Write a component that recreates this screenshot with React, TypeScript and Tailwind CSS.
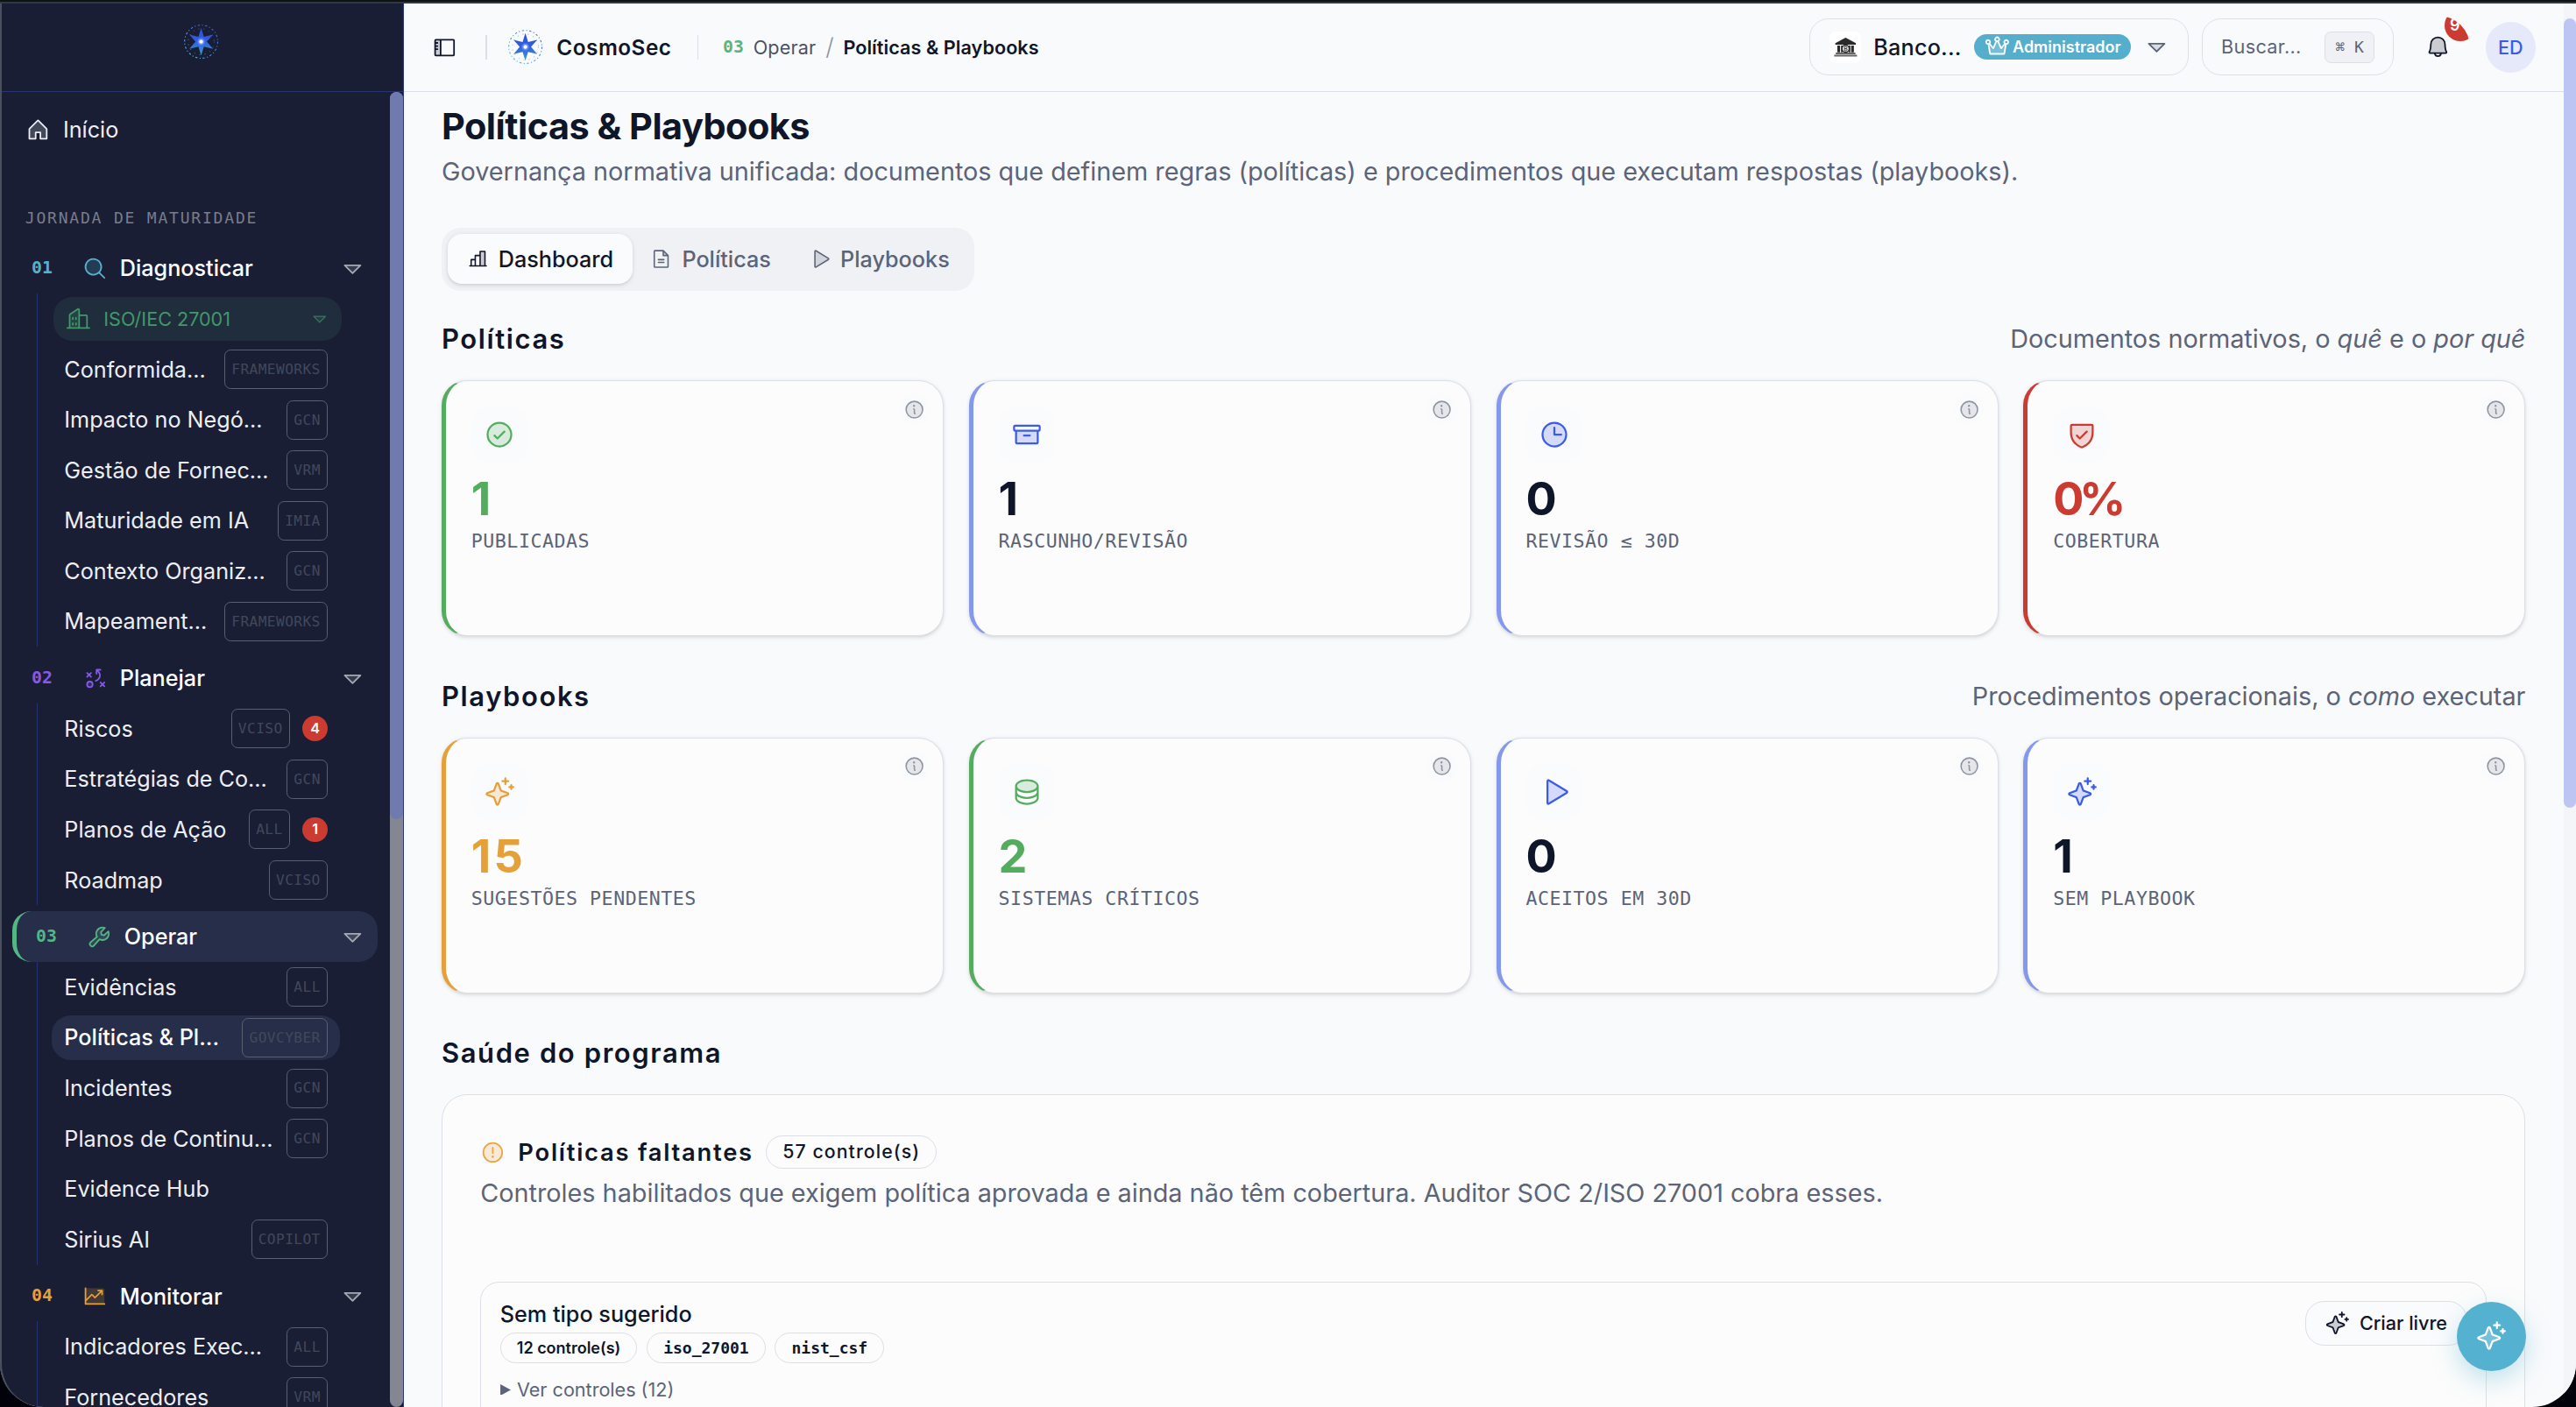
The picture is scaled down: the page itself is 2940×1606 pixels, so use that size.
import type { ReactNode } from 'react';
import type { IconType } from 'react-icons';
import {
  PiArchiveDuotone,
  PiBellDuotone,
  PiBuildingsDuotone,
  PiCaretDownDuotone,
  PiChartBarDuotone,
  PiChartLineUpDuotone,
  PiCheckCircleDuotone,
  PiClockDuotone,
  PiCrownDuotone,
  PiDatabaseDuotone,
  PiFileTextDuotone,
  PiHouseDuotone,
  PiInfoDuotone,
  PiMagnifyingGlassDuotone,
  PiPlayDuotone,
  PiShieldCheckDuotone,
  PiSidebarDuotone,
  PiSparkleDuotone,
  PiStrategyDuotone,
  PiWarningCircleDuotone,
  PiWrenchDuotone,
} from 'react-icons/pi';

interface NavItem {
  label: string;
  tag?: string;
  count?: number;
  active?: boolean;
}

interface NavGroup {
  num: string;
  label: string;
  icon: IconType;
  color: string;
  active?: boolean;
  framework?: string;
  items: NavItem[];
}

interface Stat {
  icon: IconType;
  value: string;
  label: string;
  border: string;
  iconColor: string;
  valueClass: string;
}

const mono = "font-['DejaVu_Sans_Mono','Liberation_Mono',monospace]";

const navGroups: NavGroup[] = [
  {
    num: '01',
    label: 'Diagnosticar',
    icon: PiMagnifyingGlassDuotone,
    color: 'text-[#54b1d0]',
    framework: 'ISO/IEC 27001',
    items: [
      { label: 'Conformida...', tag: 'FRAMEWORKS' },
      { label: 'Impacto no Negó...', tag: 'GCN' },
      { label: 'Gestão de Fornec...', tag: 'VRM' },
      { label: 'Maturidade em IA', tag: 'IMIA' },
      { label: 'Contexto Organiz...', tag: 'GCN' },
      { label: 'Mapeament...', tag: 'FRAMEWORKS' },
    ],
  },
  {
    num: '02',
    label: 'Planejar',
    icon: PiStrategyDuotone,
    color: 'text-[#8659ea]',
    items: [
      { label: 'Riscos', tag: 'VCISO', count: 4 },
      { label: 'Estratégias de Co...', tag: 'GCN' },
      { label: 'Planos de Ação', tag: 'ALL', count: 1 },
      { label: 'Roadmap', tag: 'VCISO' },
    ],
  },
  {
    num: '03',
    label: 'Operar',
    icon: PiWrenchDuotone,
    color: 'text-[#54b685]',
    active: true,
    items: [
      { label: 'Evidências', tag: 'ALL' },
      { label: 'Políticas & Pl...', tag: 'GOVCYBER', active: true },
      { label: 'Incidentes', tag: 'GCN' },
      { label: 'Planos de Continu...', tag: 'GCN' },
      { label: 'Evidence Hub' },
      { label: 'Sirius AI', tag: 'COPILOT' },
    ],
  },
  {
    num: '04',
    label: 'Monitorar',
    icon: PiChartLineUpDuotone,
    color: 'text-[#e5a03a]',
    items: [
      { label: 'Indicadores Exec...', tag: 'ALL' },
      { label: 'Fornecedores', tag: 'VRM' },
    ],
  },
];

const policyStats: Stat[] = [
  { icon: PiCheckCircleDuotone, value: '1', label: 'Publicadas', border: 'border-l-[#54ad5f]', iconColor: 'text-[#54ad5f]', valueClass: 'text-[#54ad5f]' },
  { icon: PiArchiveDuotone, value: '1', label: 'Rascunho/Revisão', border: 'border-l-[#8499ee]', iconColor: 'text-[#3b5ce6]', valueClass: 'text-[#0f1629]' },
  { icon: PiClockDuotone, value: '0', label: 'Revisão ≤ 30d', border: 'border-l-[#8499ee]', iconColor: 'text-[#3b5ce6]', valueClass: 'text-[#0f1629]' },
  { icon: PiShieldCheckDuotone, value: '0%', label: 'Cobertura', border: 'border-l-[#cb3b32]', iconColor: 'text-[#cb3b32]', valueClass: 'text-[#cb3b32] tracking-[-0.1em]' },
];

const playbookStats: Stat[] = [
  { icon: PiSparkleDuotone, value: '15', label: 'Sugestões pendentes', border: 'border-l-[#e5a03a]', iconColor: 'text-[#e5a03a]', valueClass: 'text-[#e5a03a] tracking-[0.06em]' },
  { icon: PiDatabaseDuotone, value: '2', label: 'Sistemas críticos', border: 'border-l-[#54ad5f]', iconColor: 'text-[#54ad5f]', valueClass: 'text-[#54ad5f]' },
  { icon: PiPlayDuotone, value: '0', label: 'Aceitos em 30d', border: 'border-l-[#8499ee]', iconColor: 'text-[#3b5ce6]', valueClass: 'text-[#0f1629]' },
  { icon: PiSparkleDuotone, value: '1', label: 'Sem playbook', border: 'border-l-[#8499ee]', iconColor: 'text-[#3b5ce6]', valueClass: 'text-[#0f1629]' },
];

function Logo({ className }: { className?: string }) {
  return (
    <svg viewBox="0 0 48 48" className={className} fill="none">
      <defs>
        <linearGradient id="star" x1="0" y1="0" x2="0" y2="1">
          <stop offset="0" stopColor="#2f4be0" />
          <stop offset="0.5" stopColor="#2f62d8" />
          <stop offset="1" stopColor="#3f9bd0" />
        </linearGradient>
        <linearGradient id="ring" x1="0" y1="1" x2="1" y2="0">
          <stop offset="0" stopColor="#5cc3e8" />
          <stop offset="1" stopColor="#3b5ce6" />
        </linearGradient>
        <radialGradient id="core">
          <stop offset="0.3" stopColor="#fff" />
          <stop offset="0.5" stopColor="#7fa0ff" />
          <stop offset="1" stopColor="#3b66f0" stopOpacity="0.4" />
        </radialGradient>
      </defs>
      <circle cx="24" cy="24" r="21" stroke="url(#ring)" strokeWidth="1.2" strokeDasharray="2.6 2.8 1.2 2.8" />
      <circle cx="24" cy="24" r="16.5" stroke="url(#ring)" strokeWidth="1.1" strokeDasharray="1.2 5.5" opacity="0.7" />
      <path
        fill="url(#star)"
        d="M24 6.5 L27.5 17.8 L39 15 L31.200 24 L39 33 L27.5 30.200 L24 41.5 L20.5 30.200 L9 33 L16.800 24 L9 15 L20.5 17.8 Z"
      />
      <circle cx="24" cy="24" r="5.5" fill="url(#core)" />
    </svg>
  );
}

function BankLogo() {
  return (
    <span className="flex size-5 items-center justify-center rounded bg-white">
      <svg viewBox="0 0 32 24" className="w-4" fill="#2a2a2a">
        <path d="M16 0 L29 7 V9 H3 V7 Z" />
        <path d="M5.5 10h3.5v8.500H5.500z M10.200 10h2v8.500h-2z M20 10h2v8.500h-2z M23 10h3.500v8.500H23z" />
        <path d="M3.500 19h25v2h-25z M1.500 21.800h29V24h-29z" fill="#666" />
        <circle cx="16" cy="14" r="4.600" fill="#eee" stroke="#2a2a2a" strokeWidth="1.500" />
        <path d="M14.600 11.400h1.800a1.300 1.300 0 0 1 0 2.600h-1.800z m0 2.600h2a1.300 1.300 0 0 1 0 2.600h-2z" fill="none" stroke="#2a2a2a" strokeWidth="0.900" />
      </svg>
    </span>
  );
}

function SidebarItem({ item }: { item: NavItem }) {
  return (
    <div
      className={`flex h-7 items-center gap-2 rounded-xl px-2 text-sm ${
        item.active ? 'bg-[#272e49] font-medium text-white' : 'text-[#eceef3]'
      }`}
    >
      <span className="flex-1 whitespace-nowrap">{item.label}</span>
      {item.tag && (
        <span className={`flex h-[25px] items-center rounded border border-[#5a6072] px-1 text-[9px] tracking-[0.025em] text-[#41485b] ${mono}`}>
          {item.tag}
        </span>
      )}
      {item.count && (
        <span className="flex size-4 items-center justify-center rounded-full bg-[#cb3b32] text-[9px] font-semibold text-white">
          {item.count}
        </span>
      )}
    </div>
  );
}

function SidebarGroup({ group }: { group: NavGroup }) {
  const Icon = group.icon;
  return (
    <div className="shrink-0">
      <div
        className={`flex h-8 items-center gap-2 rounded-xl pr-2 pl-3 text-sm font-medium text-white ${
          group.active ? 'border-l-3 border-[#54b685] bg-[#272e49]' : ''
        }`}
      >
        <span className={`w-6 text-[11px] font-bold ${mono} ${group.color}`}>{group.num}</span>
        <Icon className={`size-4 ${group.color}`} />
        <span className="flex-1">{group.label}</span>
        <PiCaretDownDuotone className="size-4 text-[#a5a8b3]" />
      </div>
      <div className="mr-[23.700px] ml-[15.500px] flex flex-col gap-1 border-l border-[#25346e] py-0.5 pl-[8.700px]">
        {group.framework && (
          <div className="-mr-px ml-px flex h-7 items-center gap-2 rounded-xl bg-[#1f2d3c] px-2 text-xs text-[#43976b]">
            <PiBuildingsDuotone className="size-4" />
            <span className="flex-1">{group.framework}</span>
            <PiCaretDownDuotone className="size-3 opacity-70" />
          </div>
        )}
        {group.items.map((item) => (
          <SidebarItem key={item.label} item={item} />
        ))}
      </div>
    </div>
  );
}

function Sidebar() {
  return (
    <aside className="flex w-64 shrink-0 flex-col border-r border-[#2a3a7c] bg-[#191e34]">
      <div className="flex h-14 shrink-0 items-center justify-center border-b border-[#27346f] pb-[7px]">
        <Logo className="size-6" />
      </div>
      <div className="flex min-h-0 flex-1">
        <nav className="flex flex-1 flex-col gap-1 overflow-hidden p-2">
          <div className="flex h-8 shrink-0 items-center gap-2 px-2 text-sm text-[#eceef3]">
            <PiHouseDuotone className="size-4" />
            <span>Início</span>
          </div>
          <p className={`mt-5 -mb-1 h-8 shrink-0 px-2 text-[10px] leading-8 tracking-[0.1em] text-[#797d8b] ${mono}`}>
            JORNADA DE MATURIDADE
          </p>
          {navGroups.map((group) => (
            <SidebarGroup key={group.num} group={group} />
          ))}
        </nav>
        <div className="w-2 shrink-0">
          <div className="h-full rounded-full bg-[#848791]">
            <div className="h-[461px] rounded-full bg-[#6f7aae]" />
          </div>
        </div>
      </div>
    </aside>
  );
}

function Header() {
  return (
    <header className="flex h-14 shrink-0 items-center border-b border-[#dcdfe9] pr-[17.500px] pl-3">
      <button className="flex size-7 items-center justify-center text-[#0f1629]">
        <PiSidebarDuotone className="size-4" />
      </button>
      <div className="mx-3 h-4 w-px bg-[#dcdfe9]" />
      <Logo className="size-6" />
      <span className="ml-2 text-[13.500px] font-semibold tracking-[0.021em] text-[#0f1629]">CosmoSec</span>
      <div className="mr-[15.500px] ml-[16.500px] h-4 border-l border-[#dcdfe9]" />
      <div className="flex items-center gap-1.5 text-xs">
        <span className={`text-[11px] font-bold text-[#54b685] ${mono}`}>03</span>
        <span className="tracking-[0.008em] text-[#4b5266]">Operar</span>
        <span className="text-[15px] font-light text-[#8e93a3]">/</span>
        <span className="font-semibold tracking-[0.003em] text-[#0f1629]">Políticas & Playbooks</span>
      </div>

      <div className="ml-auto flex items-center">
        <div className="flex h-9 items-center gap-2 rounded-xl border border-[#dcdfe9] px-3">
          <BankLogo />
          <span className="text-sm font-medium tracking-[0.008em] text-[#0f1629]">Banco...</span>
          <span className="flex h-4 items-center gap-0.5 rounded-full bg-[#54aecc] px-[6.500px] text-[10px] font-semibold text-white">
            <PiCrownDuotone className="size-4" />
            Administrador
          </span>
          <PiCaretDownDuotone className="size-4 text-[#5b6478]" />
        </div>
        <div className="ml-2 flex h-9 w-[122px] items-center justify-between rounded-xl border border-[#dcdfe9] px-3">
          <span className="text-xs tracking-[0.016em] text-[#5b6478]">Buscar...</span>
          <kbd className={`flex h-5 items-center rounded border border-[#dcdfe9] bg-[#f0f1f5] px-1.5 text-[10px] text-[#5b6478] ${mono}`}>
            ⌘ K
          </kbd>
        </div>
        <button className="relative ml-2 flex size-10 items-center justify-center overflow-hidden rounded-full text-[#0f1629]">
          <PiBellDuotone className="size-4" />
          <span className="absolute -top-1 -right-1 flex size-5 items-center justify-center rounded-full bg-[#cb3b32] text-[10px] font-semibold text-white">
            9+
          </span>
        </button>
        <div className="ml-2.5 flex size-8 items-center justify-center rounded-full bg-[#e6e9fa] text-xs font-medium text-[#3b5ce6]">
          ED
        </div>
      </div>
    </header>
  );
}

function Tabs() {
  return (
    <div className="mt-[23.500px] flex h-10 shrink-0 items-center self-start rounded-xl bg-[#f0f1f5] p-1 text-sm font-medium text-[#5b6478]">
      <div className="flex h-8 items-center gap-1.5 rounded-[9px] bg-[#fafbfd] px-3 text-[#0f1629] shadow-sm">
        <PiChartBarDuotone className="size-3.5" />
        Dashboard
      </div>
      <div className="flex h-8 items-center gap-1.5 pr-3 pl-[11.500px]">
        <PiFileTextDuotone className="size-3.5" />
        Políticas
      </div>
      <div className="flex h-8 items-center gap-1.5 px-3">
        <PiPlayDuotone className="size-3.5" />
        Playbooks
      </div>
    </div>
  );
}

function StatCard({ stat }: { stat: Stat }) {
  const Icon = stat.icon;
  return (
    <div className={`relative h-[162.600px] rounded-2xl border border-l-3 border-[#dcdfe9] bg-[#fcfcfc] p-4 shadow-sm ${stat.border}`}>
      <span className="absolute top-2 right-2 flex size-5 items-center justify-center rounded-full bg-[#fafbfc] text-[#8f94a2]">
        <PiInfoDuotone className="size-3.5" />
      </span>
      <span className={`flex size-9 items-center justify-center rounded-xl bg-[#fafbfd] ${stat.iconColor}`}>
        <Icon className="size-5" />
      </span>
      <p className={`mt-[7.500px] text-[29px] leading-[30px] font-bold ${stat.valueClass}`}>{stat.value}</p>
      <p className={`mt-[4.500px] text-xs tracking-wide text-[#5b6478] uppercase ${mono}`}>{stat.label}</p>
    </div>
  );
}

function Section({ title, hint, stats }: { title: string; hint: ReactNode; stats: Stat[] }) {
  return (
    <section className="shrink-0">
      <div className="flex h-7 items-center justify-between">
        <h2 className="text-[17.200px] font-semibold tracking-[0.052em] text-[#0f1629]">{title}</h2>
        <p className="text-base text-[#5b6478]">{hint}</p>
      </div>
      <div className="mt-3 grid grid-cols-4 gap-4">
        {stats.map((stat) => (
          <StatCard key={stat.label} stat={stat} />
        ))}
      </div>
    </section>
  );
}

function Chip({ children, className = '' }: { children: ReactNode; className?: string }) {
  return (
    <span className={`flex items-center rounded-full border border-[#dcdfe9] px-[10px] text-[#0f1629] ${className}`}>
      {children}
    </span>
  );
}

function MissingPolicies() {
  return (
    <div className="mt-3 h-[300px] rounded-2xl border border-[#dcdfe9] bg-[#fcfcfc] p-6">
      <div className="flex h-6 items-center gap-2">
        <PiWarningCircleDuotone className="size-4 text-[#eba544]" />
        <h3 className="text-[15.200px] font-semibold tracking-[0.064em] text-[#0f1629]">Políticas faltantes</h3>
        <Chip className="h-[21px] text-[11.800px] font-medium tracking-[0.052em]">57 controle(s)</Chip>
      </div>
      <p className="mt-[1.600px] text-base text-[#5b6478]">
        Controles habilitados que exigem política aprovada e ainda não têm cobertura. Auditor SOC 2/ISO 27001 cobra esses.
      </p>
      <div className="mt-[44.300px] flex h-[200px] items-start justify-between rounded-xl border border-[#dcdfe9] p-3">
        <div>
          <p className="text-sm leading-[17px] font-medium text-[#0f1629]">Sem tipo sugerido</p>
          <div className="mt-[3px] flex gap-1.5 text-[10px]">
            <Chip className="h-[19.500px] font-semibold">12 controle(s)</Chip>
            <Chip className={`h-[19.500px] font-bold ${mono}`}>iso_27001</Chip>
            <Chip className={`h-[19.500px] font-bold ${mono}`}>nist_csf</Chip>
          </div>
          <div className="mt-[8.500px] flex items-center gap-1 text-xs text-[#5b6478]">
            <svg viewBox="0 0 12 13" className="h-[7.200px] w-[6.700px]" fill="currentColor">
              <path d="M0 0 L12 6.500 L0 13 Z" />
            </svg>
            Ver controles (12)
          </div>
        </div>
        <button className="flex h-7 items-center gap-1.5 rounded-xl border border-[#dcdfe9] bg-[#fafbfd] px-3 text-xs font-medium text-[#0f1629]">
          <PiSparkleDuotone className="size-4" />
          Criar livre
        </button>
      </div>
    </div>
  );
}

export default function App() {
  return (
    <div className="h-[1606px] w-[2940px] overflow-hidden bg-[#02030a] font-['Inter','Liberation_Sans',sans-serif]">
      <div className="h-1 border-b-2 border-[#2e3a41] bg-[#111]" />
      <div className="relative h-[1602px] overflow-hidden rounded-b-[50px] bg-[#f9fafc]">
        <div className="relative flex h-[890px] w-[1633.333px] [zoom:1.8]">
          <Sidebar />
          <div className="flex min-w-0 flex-1 flex-col">
            <Header />
            <main className="flex min-h-0 flex-1 flex-col overflow-hidden px-6 pt-[6px]">
              <h1 className="text-[23px] leading-8 font-bold tracking-[-0.012em] text-[#0f1629]">Políticas & Playbooks</h1>
              <p className="mt-[0.500px] text-base text-[#5b6478]">
                Governança normativa unificada: documentos que definem regras (políticas) e procedimentos que executam respostas (playbooks).
              </p>
              <Tabs />
              <div className="mt-[16.800px] flex flex-col gap-6">
                <Section
                  title="Políticas"
                  hint={<>Documentos normativos, o <em>quê</em> e o <em>por quê</em></>}
                  stats={policyStats}
                />
                <Section
                  title="Playbooks"
                  hint={<>Procedimentos operacionais, o <em>como</em> executar</>}
                  stats={playbookStats}
                />
                <section className="shrink-0">
                  <h2 className="text-[17.200px] leading-7 font-semibold tracking-[0.052em] text-[#0f1629]">Saúde do programa</h2>
                  <MissingPolicies />
                </section>
              </div>
            </main>
          </div>
          <div className="w-2 shrink-0 bg-[#f4f5f9] pt-[9.500px]">
            <div className="h-[500.500px] rounded-full bg-[#bdc6f3]" />
          </div>
          <button className="absolute right-[31.800px] bottom-[22.800px] flex size-11 items-center justify-center rounded-full bg-[#54b1d0] text-white shadow-[0_6px_16px_rgba(84,177,208,0.35)]">
            <PiSparkleDuotone className="size-5" />
          </button>
        </div>
        {/* window edge */}
        <div className="pointer-events-none absolute inset-y-0 left-0 w-[460px] rounded-bl-[50px] border-l-2 border-[#4b505f]" />
      </div>
    </div>
  );
}
